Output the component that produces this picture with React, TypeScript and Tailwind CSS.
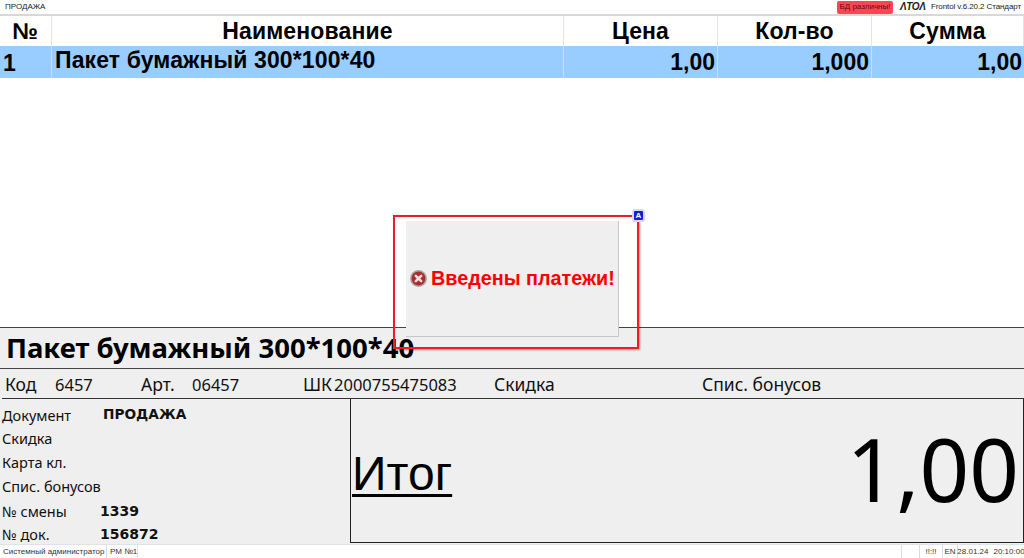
const font = { fontFamily: '"Liberation Sans", Arial, sans-serif' };
const tahomaLike = { fontFamily: '"Noto Sans", sans-serif' };
const boldWide = { fontFamily: '"DejaVu Sans", sans-serif' };

const columns = [
  { title: '№', width: 'w-[52px]' },
  { title: 'Наименование', width: 'w-[512px]' },
  { title: 'Цена', width: 'w-[154px]' },
  { title: 'Кол-во', width: 'w-[154px]' },
  { title: 'Сумма', width: 'flex-1' },
];

const ErrorIcon = () => (
  <svg width="17" height="17" viewBox="0 0 17 17" className="shrink-0">
    <circle cx="8.5" cy="8.5" r="8.5" fill="#a8a8a8" />
    <circle cx="8.5" cy="8.5" r="6.9" fill="#ad2b2b" />
    <path d="M5.8 5.8 L11.2 11.2 M11.2 5.8 L5.8 11.2" stroke="#f0dcdc" strokeWidth="2.6" strokeLinecap="round" />
  </svg>
);

const App = () => {
  return (
    <div className="relative flex h-[558px] w-[1024px] flex-col overflow-hidden bg-white text-black" style={font}>
      {/* top bar */}
      <div className="flex h-[14px] items-center text-[8px] text-[#222]">
        <span className="ml-[5px]">ПРОДАЖА</span>
        <div className="ml-auto flex items-center">
          <span className="flex h-[13px] w-[56px] items-center justify-center rounded-[2px] bg-[#ff4455] text-[#5a0d14]">БД различны!</span>
          <span className="ml-[7px] w-[27px] text-[10px] leading-none font-bold tracking-[-0.4px] text-[#222] italic">ΛTOΛ</span>
          <span className="ml-[4px] mr-[3px] w-[90px] text-[8px] tracking-[-0.1px] whitespace-nowrap">Frontol v.6.20.2 Стандарт</span>
        </div>
      </div>

      {/* table */}
      <div className="flex h-[32px] border-t-2 border-[#d8d8d8]">
        {columns.map((c) => (
          <div key={c.title} className={`${c.width} flex items-center justify-center border-r border-[#e4e4e4] text-[23px] leading-none font-bold tracking-[0.15px]`}>
            {c.title}
          </div>
        ))}
      </div>
      <div className="flex h-[32px] items-center bg-[#99ccff] text-[23px] leading-none font-bold">
        <div className="flex h-full w-[52px] items-center border-r border-[#c4e0fc] pl-[3px] pt-[3px]">1</div>
        <div className="flex h-full w-[512px] items-center border-r border-[#c4e0fc] pl-[3px] pb-[3px] tracking-[0.12px]">Пакет бумажный 300*100*40</div>
        <div className="flex h-full w-[154px] items-center justify-end border-r border-[#c4e0fc] pr-[2px]">1,00</div>
        <div className="flex h-full w-[154px] items-center justify-end border-r border-[#c4e0fc] pr-[2px]">1,000</div>
        <div className="flex h-full flex-1 items-center justify-end pr-[2px]">1,00</div>
      </div>

      <div className="flex-1" />

      {/* bottom panel */}
      <div className="h-[217px] bg-[#efefef]">
        <div className="flex h-[42px] items-center border-y border-[#444] pl-[6px] text-[27.5px] leading-none font-bold" style={tahomaLike}>
          Пакет бумажный 300*100*40
        </div>
        <div className="flex h-[29px] items-center pt-[3px] text-[16.5px] leading-none text-[#111]" style={tahomaLike}>
          <span className="ml-[5px] w-[50px] text-[17.5px]">Код</span>
          <span className="w-[86px]">6457</span>
          <span className="w-[51px] text-[17.5px]">Арт.</span>
          <span className="w-[111px]">06457</span>
          <span className="w-[31px] text-[17.5px]">ШК</span>
          <span className="w-[160px]">2000755475083</span>
          <span className="w-[208px] text-[17.5px]">Скидка</span>
          <span className="text-[17.5px]">Спис. бонусов</span>
        </div>
        <div className="ml-[2px] flex h-[145px] border-t border-[#333]">
          <div className="w-[348px] pt-[4px] text-[14.5px] leading-none text-[#111]" style={tahomaLike}>
            <div className="flex h-[24px] items-center">
              <span className="w-[101px]">Документ</span>
              <span className="text-[13.7px] font-bold" style={boldWide}>ПРОДАЖА</span>
            </div>
            <div className="flex h-[23px] items-center">Скидка</div>
            <div className="flex h-[24px] items-center">Карта кл.</div>
            <div className="flex h-[25px] items-center">Спис. бонусов</div>
            <div className="flex h-[24px] items-center">
              <span className="w-[98px]">№ смены</span>
              <span className="text-[14px] font-bold" style={boldWide}>1339</span>
            </div>
            <div className="flex h-[22px] items-center">
              <span className="w-[98px]">№ док.</span>
              <span className="text-[14px] font-bold" style={boldWide}>156872</span>
            </div>
          </div>
          <div className="flex flex-1 items-center justify-between border-x border-b border-[#222] pl-[1px] pr-[4px]">
            <span className="mt-[6px] text-[48px] leading-none underline decoration-[3px] underline-offset-4">Итог</span>
            <span className="mb-[5px] text-[87px] leading-none" style={tahomaLike}>1,00</span>
          </div>
        </div>
      </div>

      {/* status bar */}
      <div className="flex h-[14px] items-center border-t border-[#dfe3e8] text-[8px] whitespace-nowrap text-[#333]">
        <span className="flex h-full w-[107px] items-center border-r border-[#d8dde3] pl-[3px]">Системный администратор</span>
        <span className="flex h-full w-[31px] items-center border-r border-[#d8dde3] pl-[3px]">РМ №1</span>
        <span className="h-full flex-1 border-r border-[#d8dde3]" />
        <span className="flex h-full w-[18px] border-r border-[#d8dde3]" />
        <span className="flex h-full w-[23px] items-center justify-center border-r border-[#d8dde3]">!!:!!</span>
        <span className="flex h-full w-[15px] items-center justify-center border-r border-[#d8dde3]">EN</span>
        <span className="flex h-full w-[66px] items-center justify-center gap-[5px]">
          <span>28.01.24</span>
          <span>20:10:00</span>
        </span>
      </div>

      {/* message dialog */}
      <div className="absolute left-[406px] top-[221px] flex h-[116px] w-[213px] items-center gap-[4px] border-r border-b border-[#c6c6c6] bg-[#efefef] pl-[4px]">
        <ErrorIcon />
        <span className="pt-[1px] text-[19.8px] leading-none font-bold whitespace-nowrap text-[#ff0000]">Введены платежи!</span>
      </div>
      {/* red highlight frame */}
      <div className="absolute left-[393px] top-[215px] h-[134px] w-[246px] border-2 border-[#ee1c25] shadow-[1px_1px_2px_rgba(0,0,0,0.4)]" />
      <div className="absolute left-[632px] top-[209px] flex h-[13px] w-[13px] items-center justify-center rounded-[3px] border-2 border-[#d5daf0] bg-[#1020d8] text-[8px] leading-none font-bold text-white">
        A
      </div>
    </div>
  );
};

export default App;
